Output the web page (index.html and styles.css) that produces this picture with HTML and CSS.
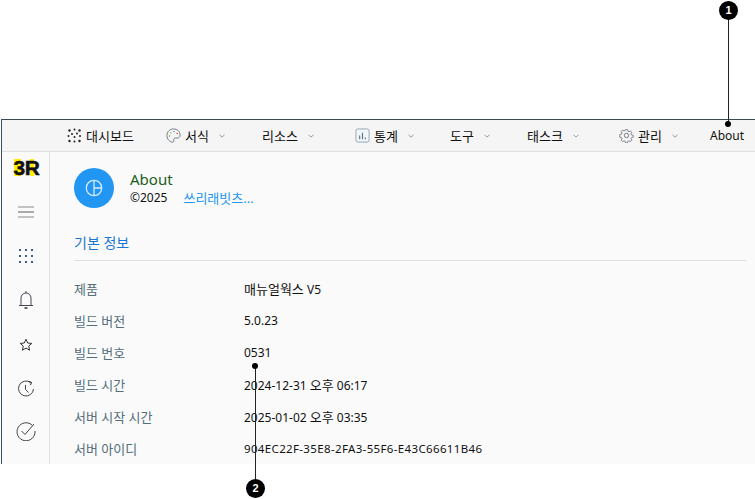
FILE: index.html
```html
<!DOCTYPE html>
<html lang="ko">
<head>
    <meta charset="UTF-8">
    <meta name="viewport" content="width=device-width, initial-scale=1.0">
    <title>About</title>
    <link rel="stylesheet" href="styles.css">
</head>
<body>
    <div class="frame">
        <nav class="topbar">
            <a class="nav-item">
                <svg class="nav-icon" viewBox="0 0 15 15"><g fill="#222"><circle cx="2.500" cy="2.500" r="1.200"/><circle cx="7.500" cy="1.500" r="1"/><circle cx="12.500" cy="2.500" r="1.200"/><circle cx="5" cy="6" r="1"/><circle cx="10" cy="5.500" r="1"/><circle cx="1.500" cy="8" r="1"/><circle cx="13" cy="8" r="1"/><circle cx="7.500" cy="9" r="1"/><circle cx="2.500" cy="13" r="1.200"/><circle cx="7.500" cy="13.500" r="1"/><circle cx="12.500" cy="13" r="1.200"/></g></svg>
                <span>대시보드</span>
            </a>
            <a class="nav-item">
                <svg class="nav-icon" viewBox="0 0 16 16" fill="none" stroke="#6b7480" stroke-width="1"><path d="M8 1C4 1 1 4 1 8s3 7 6 7c1.500 0 1.800-1 1.300-2-.5-1.200.2-2.300 1.500-2.300H12c1.800 0 3-1.200 3-3C15 3.700 12 1 8 1z"/><circle cx="5" cy="5" r=".8" fill="#c79a3a" stroke="none"/><circle cx="8.500" cy="3.800" r=".8" fill="#3a8fc7" stroke="none"/><circle cx="11.800" cy="5.800" r=".8" fill="#c74a3a" stroke="none"/><circle cx="3.800" cy="8.500" r=".8" fill="#4aa75a" stroke="none"/></svg>
                <span>서식</span>
                <svg class="chevron" viewBox="0 0 6 4"><path d="M.5.8 3 3.200 5.500.8"/></svg>
            </a>
            <a class="nav-item">
                <span>리소스</span>
                <svg class="chevron" viewBox="0 0 6 4"><path d="M.5.8 3 3.200 5.500.8"/></svg>
            </a>
            <a class="nav-item">
                <svg class="nav-icon" viewBox="0 0 16 16" fill="none"><rect x="1" y="1" width="14" height="14" rx="2" stroke="#8fa3b5" fill="#f3f6f9"/><path d="M5 12V8M8 12V5M11 12v-2" stroke="#5f6f7f" stroke-width="1.200"/></svg>
                <span>통계</span>
                <svg class="chevron" viewBox="0 0 6 4"><path d="M.5.8 3 3.200 5.500.8"/></svg>
            </a>
            <a class="nav-item">
                <span>도구</span>
                <svg class="chevron" viewBox="0 0 6 4"><path d="M.5.8 3 3.200 5.500.8"/></svg>
            </a>
            <a class="nav-item">
                <span>태스크</span>
                <svg class="chevron" viewBox="0 0 6 4"><path d="M.5.8 3 3.200 5.500.8"/></svg>
            </a>
            <a class="nav-item">
                <svg class="nav-icon" viewBox="0 0 16 16" fill="none" stroke="#6b7480" stroke-width="1"><path d="M6.800 1h2.400l.4 2 1.400.6 1.700-1.100 1.700 1.700-1.100 1.700.6 1.400 2 .4v2.400l-2 .4-.6 1.400 1.100 1.700-1.700 1.700-1.700-1.100-1.400.6-.4 2H6.800l-.4-2-1.400-.6-1.700 1.100-1.700-1.700 1.100-1.700-.6-1.400-2-.4V6.800l2-.4.6-1.400-1.100-1.700 1.700-1.700 1.700 1.100 1.400-.6z" transform="translate(.8 .8) scale(.9)"/><circle cx="8" cy="8" r="2.300"/></svg>
                <span>관리</span>
                <svg class="chevron" viewBox="0 0 6 4"><path d="M.5.8 3 3.200 5.500.8"/></svg>
            </a>
            <a class="nav-item">
                <span class="latin">About</span>
            </a>
        </nav>
        <div class="layout">
            <aside class="sidebar">
                <div class="logo">3R</div>
                <svg class="side-icon menu-icon" viewBox="0 0 18 14"><path d="M1 2h16M1 12h16" stroke="#8a8a8a" fill="none"/><path d="M1 7h16" stroke="#aaa" stroke-width="2" fill="none"/></svg>
                <svg class="side-icon grid-icon" viewBox="0 0 16 16"><g fill="#3b5f86"><rect x="1" y="1" width="2" height="2"/><rect x="7" y="1" width="2" height="2"/><rect x="13" y="1" width="2" height="2"/><rect x="1" y="7" width="2" height="2"/><rect x="7" y="7" width="2" height="2"/><rect x="13" y="7" width="2" height="2"/><rect x="1" y="13" width="2" height="2"/><rect x="7" y="13" width="2" height="2"/><rect x="13" y="13" width="2" height="2"/></g></svg>
                <svg class="side-icon bell-icon" viewBox="0 0 16 20" fill="none" stroke="#4a4458"><path d="M3 15V8a5 5 0 0 1 10 0v7M1 15.500h14M8 1v2"/><path d="M6.500 18h3" stroke="#222" stroke-width="1.400"/></svg>
                <svg class="side-icon star-icon" viewBox="0 0 14 14" fill="none" stroke="#333"><path d="M7 1.200 8.700 5l4.100.4-3.100 2.700.9 4.100L7 10.100l-3.600 2.100.9-4.100-3.100-2.700L5.300 5z"/></svg>
                <svg class="side-icon clock-icon" viewBox="0 0 18 18" fill="none" stroke="#444"><path d="M13.500 2.500A7.500 7.500 0 1 0 16.500 9"/><path d="M8.500 5v4.500l3 3"/><path d="M11.500 1.500l3 .8-1 2.700" stroke="#222"/></svg>
                <svg class="side-icon check-icon" viewBox="0 0 20 20" fill="none" stroke="#444"><path d="M16.500 4.500A9 9 0 1 0 19 10"/><path d="M5.500 10l3.500 3.500L18 3"/></svg>
            </aside>
            <main class="content">
                <div class="about-head">
                    <div class="about-badge">
                        <svg viewBox="0 0 14 14" fill="none" stroke="#d7ecff" width="18" height="18"><circle cx="7" cy="7" r="6"/><path d="M7 1v12M7 7h6"/></svg>
                    </div>
                    <div>
                        <div class="about-title">About</div>
                        <div class="about-sub"><span class="latin">©2025</span><a class="about-link">쓰리래빗츠...</a></div>
                    </div>
                </div>
                <h2 class="section-title">기본 정보</h2>
                <dl class="info-list">
                    <div class="info-row"><dt>제품</dt><dd><span class="ko">매뉴얼웍스</span> V5</dd></div>
                    <div class="info-row"><dt>빌드 버전</dt><dd>5.0.23</dd></div>
                    <div class="info-row"><dt>빌드 번호</dt><dd>0531</dd></div>
                    <div class="info-row"><dt>빌드 시간</dt><dd>2024-12-31 <span class="ko">오후</span> 06:17</dd></div>
                    <div class="info-row"><dt>서버 시작 시간</dt><dd>2025-01-02 <span class="ko">오후</span> 03:35</dd></div>
                    <div class="info-row"><dt>서버 아이디</dt><dd class="server-id">904EC22F-35E8-2FA3-55F6-E43C66611B46</dd></div>
                </dl>
            </main>
        </div>
    </div>

    <!-- callouts -->
    <div class="callout-line line-1"></div>
    <div class="callout-dot dot-1"></div>
    <div class="callout-num num-1">1</div>
    <div class="callout-line line-2"></div>
    <div class="callout-dot dot-2"></div>
    <div class="callout-num num-2">2</div>
</body>
</html>
```

FILE: styles.css
```css
* {
    margin: 0;
    padding: 0;
    box-sizing: border-box;
}
html, body {
    width: 755px;
    height: 499px;
    overflow: hidden;
    background: #fff;
}
body {
    position: relative;
    padding-top: 119px;
    padding-left: 1px;
    font-family: "Noto Sans", "Noto Sans CJK KR", sans-serif;
    font-size: 12px;
    color: #111;
}
.frame {
    height: 345px;
    border-top: 1px solid #3f4852;
    border-left: 1px solid #3f4e60;
    overflow: hidden;
}
.topbar {
    display: grid;
    grid-template-columns: 99px 96px 93px 95px 77px 92px 91px auto;
    align-items: center;
    height: 32px;
    padding-left: 65px;
    background: #f5f5f5;
    border-bottom: 1px solid #e0e0e0;
    font-size: 13px;
}
.nav-item {
    display: flex;
    align-items: center;
    line-height: 26px;
}
.latin {
    font-family: "Noto Sans", sans-serif;
    font-size: 12px;
}
.ko {
    font-size: 13px;
}
.nav-icon {
    width: 15px;
    height: 15px;
    margin-right: 4px;
}
.chevron {
    width: 6px;
    height: 4px;
    margin-left: 10px;
    fill: none;
    stroke: #999;
}
.layout {
    display: flex;
    height: 312px;
}
.sidebar {
    display: flex;
    flex-direction: column;
    align-items: center;
    width: 48px;
    flex-shrink: 0;
    background: #fafafa;
    border-right: 1px solid #e0e0e0;
}
.logo {
    margin-top: 7px;
    height: 17px;
    width: 24px;
    font-family: "Liberation Sans", sans-serif;
    font-size: 21px;
    line-height: 17px;
    font-weight: bold;
    letter-spacing: -.5px;
    -webkit-text-stroke: .5px #111;
    background: linear-gradient(90deg, #ffee00 0 7px, transparent 7px 16px, #ffee00 16px 20px, transparent 20px);
}
.side-icon {
    display: block;
}
.menu-icon {
    width: 18px;
    height: 14px;
    margin-top: 29px;
}
.grid-icon {
    width: 16px;
    height: 16px;
    margin-top: 29px;
}
.bell-icon {
    width: 16px;
    height: 20px;
    margin-top: 26px;
}
.star-icon {
    width: 14px;
    height: 14px;
    margin-top: 28px;
}
.clock-icon {
    width: 18px;
    height: 18px;
    margin-top: 28px;
}
.check-icon {
    width: 20px;
    height: 20px;
    margin-top: 23px;
}
.content {
    flex: 1;
    background: #fafafa;
    padding: 16px 8px 0 24px;
}
.about-head {
    display: flex;
    align-items: center;
    gap: 16px;
}
.about-badge {
    display: flex;
    align-items: center;
    justify-content: center;
    width: 40px;
    height: 40px;
    border-radius: 50%;
    background: #2196f3;
}
.about-title {
    font-size: 15px;
    line-height: 20px;
    color: #1b5e20;
}
.about-sub {
    display: flex;
    line-height: 18px;
}
.about-link {
    margin-left: 16px;
    font-size: 13px;
    color: #2196f3;
}
.section-title {
    margin-top: 25px;
    padding-bottom: 7px;
    font-size: 14px;
    line-height: 20px;
    font-weight: normal;
    color: #1976d2;
    border-bottom: 1px solid #e0e0e0;
}
.info-list {
    margin-top: 11px;
}
.info-row {
    display: flex;
    align-items: center;
    height: 32px;
}
.info-row dt {
    width: 170px;
    font-size: 13px;
    color: #546e7a;
}
.server-id {
    letter-spacing: .35px;
    font-size: 11.5px;
}
.callout-line {
    position: absolute;
    width: 1px;
    background: #222;
}
.callout-dot {
    position: absolute;
    width: 6px;
    height: 6px;
    border-radius: 50%;
    background: #000;
}
.callout-num {
    position: absolute;
    width: 19px;
    height: 19px;
    border-radius: 50%;
    background: #000;
    color: #fff;
    font-family: "Liberation Sans", sans-serif;
    font-size: 11px;
    font-weight: bold;
    line-height: 19px;
    text-align: center;
}
.line-1 {
    left: 728px;
    top: 15px;
    height: 108px;
}
.dot-1 {
    left: 725px;
    top: 121px;
}
.num-1 {
    left: 719px;
    top: 1px;
}
.line-2 {
    left: 255px;
    top: 366px;
    height: 116px;
}
.dot-2 {
    left: 252px;
    top: 363px;
}
.num-2 {
    left: 246px;
    top: 479px;
}
```
